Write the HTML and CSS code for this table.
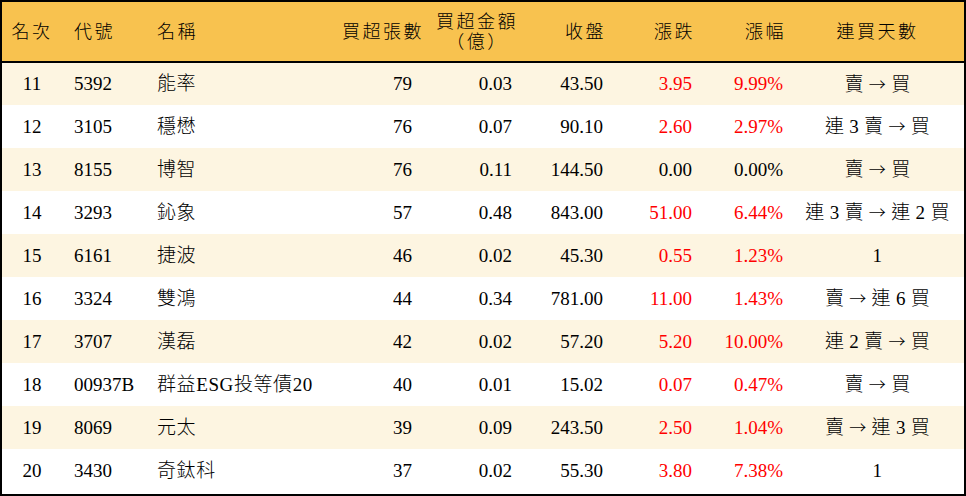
FILE: index.html
```html
<!DOCTYPE html>
<html lang="zh-Hant">
<head>
<meta charset="utf-8">
<title>買超排行</title>
<link rel="stylesheet" href="styles.css">
</head>
<body>
<div class="board">
<table class="rank">
<thead>
<tr>
<th class="c-rank">名次</th>
<th class="c-code">代號</th>
<th class="c-name">名稱</th>
<th class="c-num">買超張數</th>
<th class="c-num"><span class="two">買超金額<br>（億）</span></th>
<th class="c-num">收盤</th>
<th class="c-num">漲跌</th>
<th class="c-num">漲幅</th>
<th class="c-days">連買天數</th>
</tr>
</thead>
<tbody>
<tr><td class="c-rank">11</td><td class="c-code">5392</td><td class="c-name">能率</td><td class="c-num">79</td><td class="c-num">0.03</td><td class="c-num">43.50</td><td class="c-num up">3.95</td><td class="c-num up">9.99%</td><td class="c-days">賣 <span class="arw">→</span> 買</td></tr>
<tr><td class="c-rank">12</td><td class="c-code">3105</td><td class="c-name">穩懋</td><td class="c-num">76</td><td class="c-num">0.07</td><td class="c-num">90.10</td><td class="c-num up">2.60</td><td class="c-num up">2.97%</td><td class="c-days">連 3 賣 <span class="arw">→</span> 買</td></tr>
<tr><td class="c-rank">13</td><td class="c-code">8155</td><td class="c-name">博智</td><td class="c-num">76</td><td class="c-num">0.11</td><td class="c-num">144.50</td><td class="c-num">0.00</td><td class="c-num">0.00%</td><td class="c-days">賣 <span class="arw">→</span> 買</td></tr>
<tr><td class="c-rank">14</td><td class="c-code">3293</td><td class="c-name">鈊象</td><td class="c-num">57</td><td class="c-num">0.48</td><td class="c-num">843.00</td><td class="c-num up">51.00</td><td class="c-num up">6.44%</td><td class="c-days">連 3 賣 <span class="arw">→</span> 連 2 買</td></tr>
<tr><td class="c-rank">15</td><td class="c-code">6161</td><td class="c-name">捷波</td><td class="c-num">46</td><td class="c-num">0.02</td><td class="c-num">45.30</td><td class="c-num up">0.55</td><td class="c-num up">1.23%</td><td class="c-days">1</td></tr>
<tr><td class="c-rank">16</td><td class="c-code">3324</td><td class="c-name">雙鴻</td><td class="c-num">44</td><td class="c-num">0.34</td><td class="c-num">781.00</td><td class="c-num up">11.00</td><td class="c-num up">1.43%</td><td class="c-days">賣 <span class="arw">→</span> 連 6 買</td></tr>
<tr><td class="c-rank">17</td><td class="c-code">3707</td><td class="c-name">漢磊</td><td class="c-num">42</td><td class="c-num">0.02</td><td class="c-num">57.20</td><td class="c-num up">5.20</td><td class="c-num up">10.00%</td><td class="c-days">連 2 賣 <span class="arw">→</span> 買</td></tr>
<tr><td class="c-rank">18</td><td class="c-code">00937B</td><td class="c-name">群益ESG投等債20</td><td class="c-num">40</td><td class="c-num">0.01</td><td class="c-num">15.02</td><td class="c-num up">0.07</td><td class="c-num up">0.47%</td><td class="c-days">賣 <span class="arw">→</span> 買</td></tr>
<tr><td class="c-rank">19</td><td class="c-code">8069</td><td class="c-name">元太</td><td class="c-num">39</td><td class="c-num">0.09</td><td class="c-num">243.50</td><td class="c-num up">2.50</td><td class="c-num up">1.04%</td><td class="c-days">賣 <span class="arw">→</span> 連 3 買</td></tr>
<tr><td class="c-rank">20</td><td class="c-code">3430</td><td class="c-name">奇鈦科</td><td class="c-num">37</td><td class="c-num">0.02</td><td class="c-num">55.30</td><td class="c-num up">3.80</td><td class="c-num up">7.38%</td><td class="c-days">1</td></tr>
</tbody>
</table>
</div>
</body>
</html>
```

FILE: styles.css
```css
* { box-sizing: border-box; }

html, body {
  margin: 0;
  padding: 0;
  background: #ffffff;
}

body {
  font-family: "Liberation Serif", "Noto Sans CJK TC", serif;
  font-size: 19px;
  color: #000000;
}

.board {
  width: 966px;
  height: 496px;
  border: 2px solid #000000;
  overflow: hidden;
}

.rank {
  width: 962px;
  border-collapse: collapse;
  table-layout: fixed;
  font-weight: 300;
}

.rank th,
.rank td {
  padding: 0 12px;
  white-space: nowrap;
  font-weight: 300;
}

.rank thead tr {
  height: 60px;
  background: #f8c24f;
  border-bottom: 2px solid #000000;
}

.rank th {
  font-size: 18px;
  letter-spacing: 2.5px;
  line-height: 20px;
}

.rank tbody tr {
  height: 43px;
}

.rank tbody tr:nth-child(odd) {
  background: #fdf5e1;
}

.rank td {
  line-height: 22px;
}

.rank td.c-name { letter-spacing: 0.6px; }
.rank td.c-days { letter-spacing: 0.3px; }

.c-rank { width: 60px; text-align: center; padding: 0 !important; }
.c-code { width: 83px; text-align: left; }
.c-name { width: 185px; text-align: left; }
.c-num { text-align: right; }
.c-days { width: 169px; text-align: center; padding: 0 4px 0 0 !important; }

.rank th:nth-child(4), .rank td:nth-child(4) { width: 94px; }
.rank th:nth-child(5), .rank td:nth-child(5) { width: 100px; }
.rank th:nth-child(6), .rank td:nth-child(6) { width: 91px; }
.rank th:nth-child(7), .rank td:nth-child(7) { width: 89px; }
.rank th:nth-child(8), .rank td:nth-child(8) { width: 91px; }

.rank th.c-num { padding-right: 9px; }

.two {
  display: inline-block;
  text-align: center;
}

.arw {
  font-family: "Noto Sans CJK TC", sans-serif;
  font-size: 17px;
}

.up { color: #ff0000; }
```
